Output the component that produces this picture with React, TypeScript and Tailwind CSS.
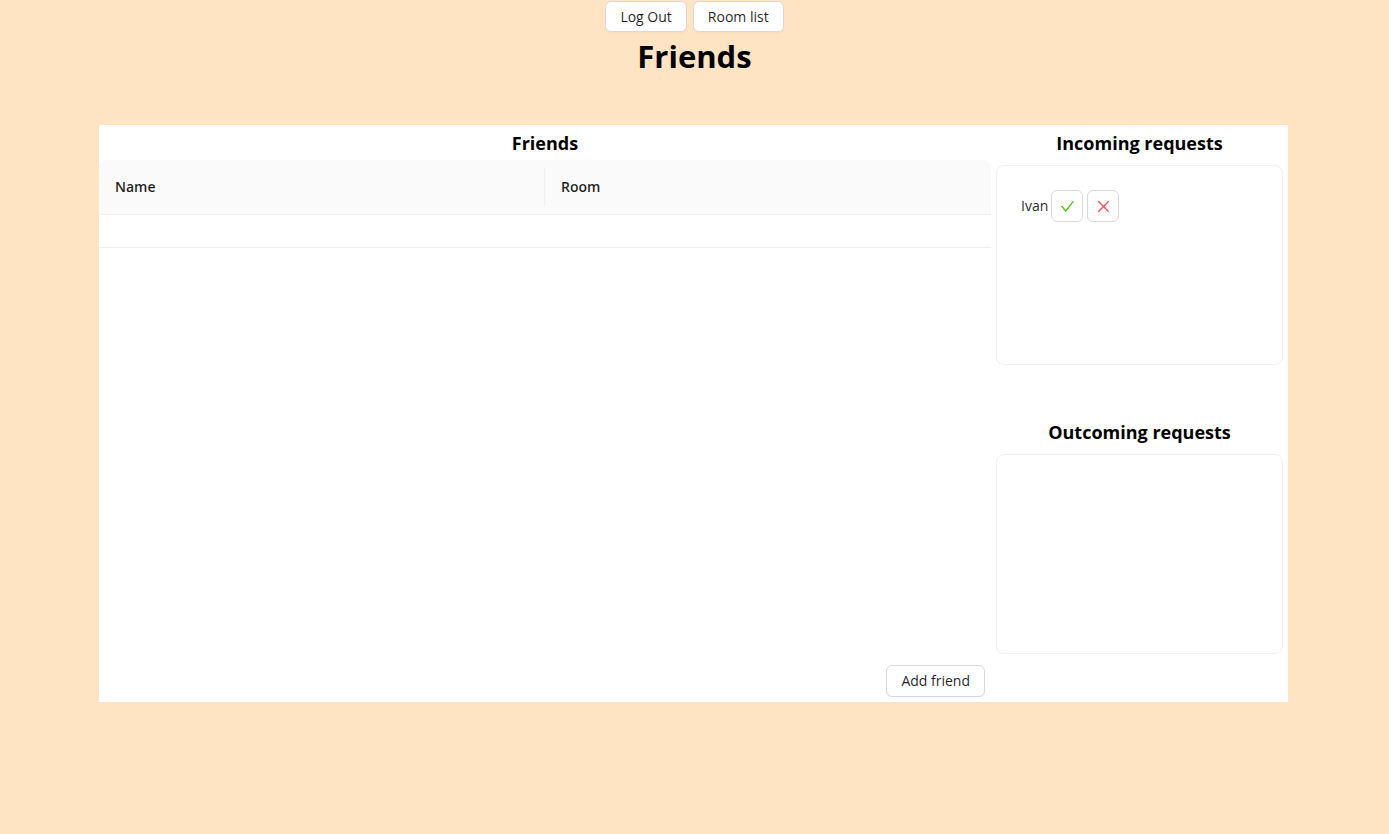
import { AiOutlineCheck, AiOutlineClose } from "react-icons/ai";

const font = { fontFamily: '"Open Sans", "Noto Sans", sans-serif' };

const Btn = ({ children, className = "" }: { children: React.ReactNode; className?: string }) => (
  <button className={`h-8 rounded-md border border-[#d9d9d9] bg-white px-[14px] text-sm text-[rgba(0,0,0,0.88)] shadow-[0_2px_0_rgba(0,0,0,0.02)] ${className}`}>
    {children}
  </button>
);

const App = () => {
  return (
    <div className="min-h-[834px] bg-[#ffe4c4] text-black" style={font}>
      <div className="flex justify-center gap-[6px] pt-px">
        <Btn className="h-[31px]">Log Out</Btn>
        <Btn className="h-[31px]">Room list</Btn>
      </div>
      <h1 className="mt-[5px] text-center text-[31px] font-bold leading-[38px]">Friends</h1>
      <div className="ml-[99px] mt-[50px] flex h-[577px] w-[1189px] bg-white pb-[5px] pr-[5px] pt-[6px]">
        <div className="flex w-[892px] flex-col">
          <h2 className="text-center text-lg font-bold leading-6">Friends</h2>
          <div className="mt-[5px] flex h-[55px] items-center rounded-tl-lg rounded-tr-lg border-b border-[#f0f0f0] bg-[#fafafa] text-sm font-semibold text-[rgba(0,0,0,0.88)]">
            <div className="relative flex h-full w-1/2 items-center px-4">
              Name
              <span className="absolute right-0 top-1/2 h-[38px] w-px -translate-y-1/2 bg-[#f0f0f0]" />
            </div>
            <div className="w-1/2 px-4">Room</div>
          </div>
          <div className="h-[33px] border-b border-[#f0f0f0]" />
          <div className="flex-1" />
          <div className="flex justify-end pr-[6px]">
            <Btn className="h-[32px]">Add friend</Btn>
          </div>
        </div>
        <div className="ml-[5px] flex flex-1 flex-col">
          <h2 className="text-center text-lg font-bold leading-6">Incoming requests</h2>
          <div className="mt-[10px] h-[200px] rounded-lg border border-[#f0f0f0] px-6 pt-6">
            <div className="flex items-center gap-1 text-sm text-[rgba(0,0,0,0.88)]">
              <span className="mr-[-1px]">Ivan</span>
              <button className="flex h-8 w-8 items-center justify-center rounded-md border border-[#d9d9d9] bg-white">
                <AiOutlineCheck className="h-[17px] w-[17px] text-[#52c41a]" />
              </button>
              <button className="flex h-8 w-8 items-center justify-center rounded-md border border-[#d9d9d9] bg-white">
                <AiOutlineClose className="h-[17px] w-[17px] text-[#ff4d4f]" />
              </button>
            </div>
          </div>
          <h2 className="mt-[55px] text-center text-lg font-bold leading-6">Outcoming requests</h2>
          <div className="mt-[10px] h-[200px] rounded-lg border border-[#f0f0f0]" />
        </div>
      </div>
    </div>
  );
};

export default App;
